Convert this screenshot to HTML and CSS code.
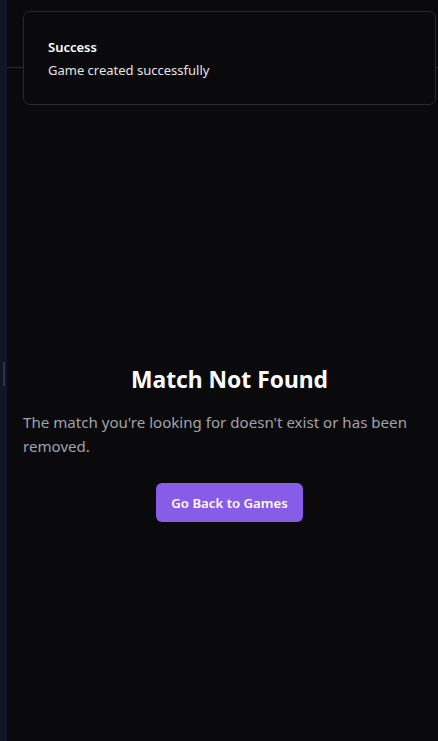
FILE: index.html
```html
<!DOCTYPE html>
<html lang="en">
<head>
<meta charset="utf-8">
<title>Match Not Found</title>
<link rel="stylesheet" href="styles.css">
</head>
<body>
<div class="app">
  <aside class="sidebar"><span class="handle"></span></aside>
  <div class="main">
    <header class="topbar"></header>
    <section class="content">
      <h1 class="title">Match Not Found</h1>
      <p class="desc">The match you're looking for doesn't exist or has been removed.</p>
      <button class="btn" type="button">Go Back to Games</button>
    </section>
  </div>
</div>
<div class="toast">
  <div class="toast-title">Success</div>
  <div class="toast-msg">Game created successfully</div>
</div>
</body>
</html>
```
FILE: styles.css
```css
* { box-sizing: border-box; }
html, body { margin: 0; padding: 0; height: 100%; }
body {
  background: #0a0a0c;
  color: #fafafa;
  font-family: "Noto Sans", "Open Sans", sans-serif;
  overflow: hidden;
}
.app { display: flex; height: 741px; }
.sidebar {
  width: 7px;
  flex: none;
  background: #0f1626;
  display: flex;
  flex-direction: column;
  align-items: center;
  justify-content: center;
  padding-top: 7px;
}
.handle {
  width: 2px;
  height: 24px;
  background: #2b3446;
}
.main { flex: 1; display: flex; flex-direction: column; }
.topbar {
  height: 68px;
  border-bottom: 1px solid #2a2a2e;
  flex: none;
}
.content {
  padding: 296px 2px 0 16px;
  display: flex;
  flex-direction: column;
  align-items: center;
}
.title {
  margin: 0;
  font-size: 22.8px;
  line-height: 32px;
  font-weight: 700;
  color: #ffffff;
}
.desc {
  margin: 14px 0 0;
  align-self: stretch;
  font-size: 15.1px;
  line-height: 24px;
  color: #a1a1aa;
}
.btn {
  margin-top: 25px;
  height: 39px;
  width: 147px;
  padding: 0;
  border: 0;
  border-radius: 6px;
  background: #875ce9;
  color: #ffffff;
  font-family: inherit;
  font-size: 13.2px;
  font-weight: 600;
}
.toast {
  position: fixed;
  top: 11px;
  left: 23px;
  right: 2px;
  height: 94px;
  background: #0a0a0c;
  border: 1px solid #2a2a2e;
  border-radius: 7px;
  padding: 26px 24px 0;
}
.toast-title {
  font-size: 13px;
  line-height: 18px;
  font-weight: 600;
  color: #ffffff;
}
.toast-msg {
  margin-top: 5px;
  font-size: 13px;
  line-height: 18px;
  color: #e4e4e7;
}
```
